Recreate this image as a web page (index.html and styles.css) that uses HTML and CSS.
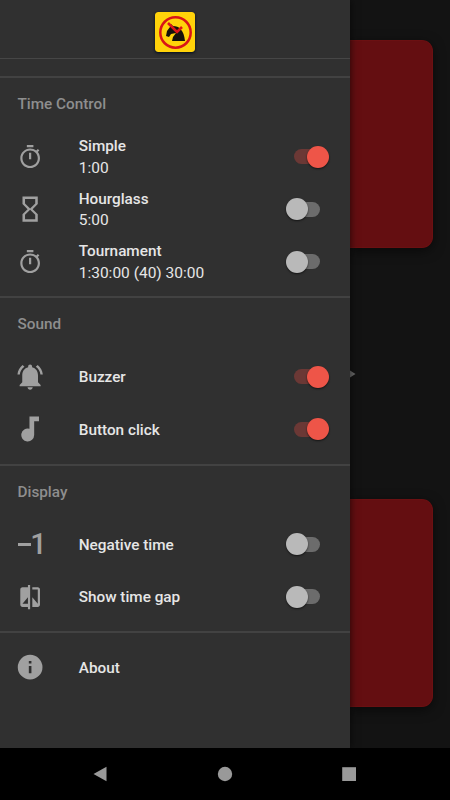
FILE: index.html
```html
<!DOCTYPE html>
<html lang="en">
<head>
<meta charset="utf-8">
<title>Chess clock</title>
<link rel="stylesheet" href="styles.css">
</head>
<body>
<svg width="0" height="0" class="defs">
  <symbol id="timer" viewBox="0 0 24 24"><path d="M15 1H9v2h6V1zm-4 13h2V8h-2v6zm8.03-6.61l1.42-1.42c-.43-.51-.9-.99-1.41-1.41l-1.42 1.42C16.07 4.74 14.12 4 12 4c-4.97 0-9 4.03-9 9s4.02 9 9 9 9-4.03 9-9c0-2.12-.74-4.07-1.97-5.61zM12 20c-3.87 0-7-3.13-7-7s3.13-7 7-7 7 3.13 7 7-3.13 7-7 7z"/></symbol>
</svg>
<div class="screen">
  <div class="app">
    <aside class="drawer">
      <header class="brand">
        <svg class="logo" viewBox="0 0 40 40">
          <rect width="40" height="40" rx="3" fill="#ffd20a"/>
          <path d="M11 24l1-5 3-4 1-3 2 2c6 0 11 4 12 15H17l1-4 3-4-5 1-2 3z" fill="#15120c"/>
          <path d="M13 11l9 9 5-5" fill="none" stroke="#dc1418" stroke-width="2.6"/>
          <circle cx="20.5" cy="20.5" r="15.2" fill="none" stroke="#d81418" stroke-width="2.5"/>
        </svg>
      </header>
      <div class="strip"></div>
      <section class="group">
        <h2>Time Control</h2>
        <div class="row"><svg class="icon"><use href="#timer"/></svg><div class="label"><b>Simple</b><span>1:00</span></div><i class="switch on"></i></div>
        <div class="row"><svg class="icon" viewBox="1.7 1.7 20.6 20.6"><path d="M6 2v6h.01L6 8.01 10 12l-4 4 .01.01H6V22h12v-5.99h-.01L18 16l-4-4 4-3.99-.01-.01H18V2H6zm10 14.5V20H8v-3.5l4-4 4 4zm-4-5l-4-4V4h8v3.5l-4 4z"/></svg><div class="label"><b>Hourglass</b><span>5:00</span></div><i class="switch"></i></div>
        <div class="row"><svg class="icon"><use href="#timer"/></svg><div class="label"><b>Tournament</b><span>1:30:00 (40) 30:00</span></div><i class="switch"></i></div>
      </section>
      <section class="group">
        <h2>Sound</h2>
        <div class="row"><svg class="icon" viewBox="0 0 24 24"><path d="M6.8 2.4L5.1.9C2.4 3 .7 6 .4 9.7h2.2c.2-3 1.800-5.600 4.200-7.300zm14.600 7.300h2.200C23.300 6 21.600 3 18.900.9l-1.700 1.500c2.400 1.700 4 4.300 4.200 7.300zM19.200 10.500c0-3.800-2-6.700-5.400-7.500v-.7C13.800 1.200 13 .4 12 .4s-1.800.8-1.800 1.900V3C6.800 3.800 4.800 6.700 4.800 10.500v6.200l-2.400 2.400v1.200h19.200v-1.200l-2.400-2.400zM12 23.500c1.300 0 2.200-.9 2.400-2.200H9.600c.2 1.300 1.100 2.200 2.400 2.200z"/></svg><div class="label"><b>Buzzer</b></div><i class="switch on"></i></div>
        <div class="row"><svg class="icon" viewBox="0 0 24 24"><path d="M11.400.4h8.700v4.300h-4.400v12.700a5.900 5.900 0 1 1-4.300-5.700z"/></svg><div class="label"><b>Button click</b></div><i class="switch on"></i></div>
      </section>
      <section class="group">
        <h2>Display</h2>
        <div class="row"><div class="icon minus"><span></span>1</div><div class="label"><b>Negative time</b></div><i class="switch"></i></div>
        <div class="row"><svg class="icon" viewBox="0 0 24 24"><path d="M10 3H5c-1.100 0-2 .9-2 2v14c0 1.100.9 2 2 2h5v2h2V1h-2v2zm0 15H5l5-6v6zm9-15h-5v2h5v13l-5-6v9h5c1.100 0 2-.9 2-2V5c0-1.100-.9-2-2-2z"/></svg><div class="label"><b>Show time gap</b></div><i class="switch"></i></div>
      </section>
      <section class="group about">
        <div class="row"><svg class="icon" viewBox="0 0 24 24"><path d="M12 .7a11.300 11.300 0 1 0 0 22.600 11.300 11.300 0 0 0 0-22.600zm1.200 17h-2.400v-6.800h2.400v6.800zm0-9h-2.400V6.400h2.400v2.300z"/></svg><div class="label"><b>About</b></div></div>
      </section>
    </aside>
    <main class="board">
      <div class="clock"></div>
      <svg class="play" viewBox="0 0 6 8"><path d="M0 .5L5.500 4 0 7.500z"/></svg>
      <div class="clock"></div>
    </main>
  </div>
  <nav class="navbar">
    <svg viewBox="0 0 16 16"><path d="M1.500 8L14.500.7v14.600z"/></svg>
    <svg viewBox="0 0 16 16"><circle cx="8" cy="8" r="7.200"/></svg>
    <svg viewBox="0 0 16 16"><path d="M1.200 1.200h13.800v13.800H1.200z"/></svg>
  </nav>
</div>
</body>
</html>
```
FILE: styles.css
```css
* { box-sizing: border-box; }
body { margin: 0; background: #000; font-family: Roboto, sans-serif; }
.defs { display: block; height: 0; }
.screen { width: 450px; height: 800px; display: flex; flex-direction: column; overflow: hidden; }
.app { flex: 0 0 747.5px; display: flex; background: #131313; }
.drawer { width: 350px; background: #303030; box-shadow: 0 0 8px #000a; z-index: 1; }
.brand { height: 59px; padding: 12px 0 0 155px; border-bottom: 1px solid #464646; }
.logo { display: block; width: 40px; height: 40px; border-radius: 3px; box-shadow: 0 1px 3px #000d1c; }
.strip { height: 17px; }
.group { border-top: 2px solid #424242; padding-bottom: 8px; }
.group h2 { margin: 0; height: 52.500px; padding: 16px 0 0 17.500px; font-size: 15.300px; line-height: 20px; font-weight: 500; color: #8e8e8e; }
.row { height: 52.500px; display: flex; align-items: center; padding: 0 21px 0 17.300px; }
.icon { width: 26.250px; height: 26.250px; margin-right: 35.200px; flex: none; fill: #a0a0a0; color: #a0a0a0; }
.label { flex: 1; padding-top: 2px; font-size: 15.300px; line-height: 21.300px; color: #e6e6e6; }
.label b, .label span { display: block; font-weight: 500; }
.label span { font-size: 15.500px; font-weight: 400; }
.about { padding-top: 8px; }
.minus { display: flex; align-items: center; font-size: 29px; line-height: 26px; font-weight: 500; white-space: nowrap; padding-left: 1px; }
.minus span { flex: none; width: 13px; height: 3px; margin-right: -1px; background: #a0a0a0; }
.switch { position: relative; width: 44px; height: 24px; display: flex; align-items: center; padding-left: 9px; }
.switch::before { content: ""; width: 26px; height: 15px; border-radius: 8px; background: #6c6c6c; }
.switch::after { content: ""; position: absolute; left: 0.500px; top: 1px; width: 22px; height: 22px; border-radius: 50%; background: #b9b9b9; box-shadow: 0 1px 2px #0009; }
.switch.on::before { background: #6b3835; }
.switch.on::after { left: 21.500px; background: #ee5548; }
.board { width: 100px; display: flex; flex-direction: column; padding: 40px 17px 40.500px 0; }
.clock { height: 208px; background: #640e11; border: 1px solid #6b1012; border-left: 0; border-radius: 0 11px 11px 0; box-shadow: 0 3px 12px #0008; }
.play { width: 6px; height: 8px; margin: auto 0; fill: #686868; }
.navbar { flex: 1; background: #000; display: flex; align-items: center; justify-content: space-between; padding: 0 93px 0 92px; }
.navbar svg { width: 16px; height: 16px; fill: #999; }
```
